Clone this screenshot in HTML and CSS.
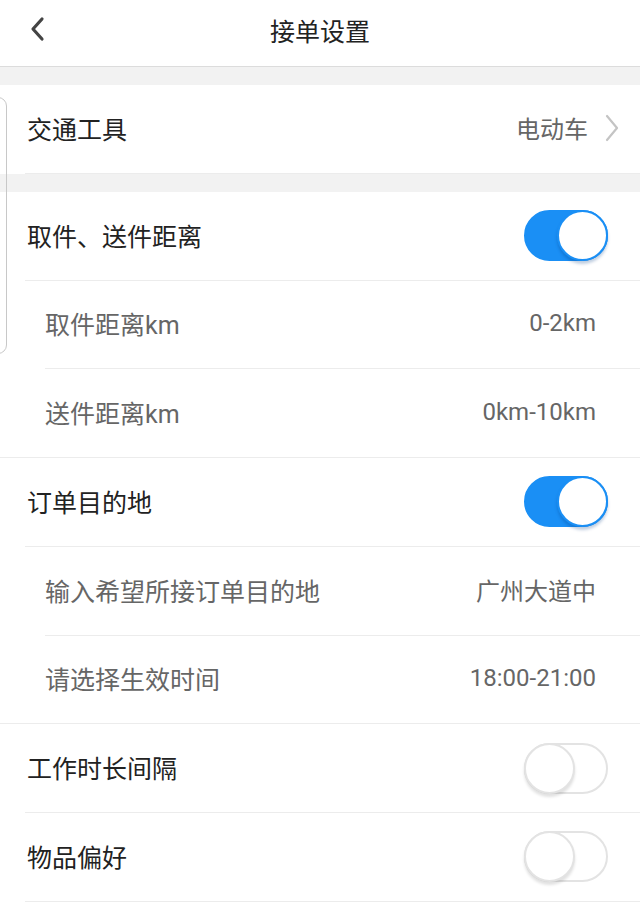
FILE: index.html
```html
<!DOCTYPE html>
<html lang="zh-CN">
<head>
    <meta charset="UTF-8">
    <meta name="viewport" content="width=device-width, initial-scale=1.0">
    <title>接单设置</title>
    <link rel="stylesheet" href="styles.css">
</head>
<body>
    <header class="topbar">
        <span class="back">
            <svg width="18" height="26" viewBox="0 0 18 26"><path d="M14 3 L5 13 L14 23" fill="none" stroke="#444" stroke-width="3.2" stroke-linecap="round" stroke-linejoin="round"/></svg>
        </span>
        <h1 class="title">接单设置</h1>
    </header>

    <div class="gap"></div>

    <div class="row">
        <span class="label">交通工具</span>
        <span class="value">电动车</span>
        <svg class="arrow" width="16" height="28" viewBox="0 0 16 28"><path d="M3 2 L13 14 L3 26" fill="none" stroke="#c4c4c4" stroke-width="2.2" stroke-linecap="round" stroke-linejoin="round"/></svg>
    </div>

    <div class="gap"></div>

    <div class="list">
        <div class="row toggle-row">
            <span class="label">取件、送件距离</span>
            <span class="switch on"><span class="knob"></span></span>
        </div>
        <div class="row sub">
            <span class="label">取件距离km</span>
            <span class="value">0-2km</span>
        </div>
        <div class="row sub last">
            <span class="label">送件距离km</span>
            <span class="value">0km-10km</span>
        </div>
        <div class="row toggle-row">
            <span class="label">订单目的地</span>
            <span class="switch on"><span class="knob"></span></span>
        </div>
        <div class="row sub">
            <span class="label">输入希望所接订单目的地</span>
            <span class="value">广州大道中</span>
        </div>
        <div class="row sub last">
            <span class="label">请选择生效时间</span>
            <span class="value">18:00-21:00</span>
        </div>
        <div class="row toggle-row">
            <span class="label">工作时长间隔</span>
            <span class="switch"><span class="knob"></span></span>
        </div>
        <div class="row toggle-row">
            <span class="label">物品偏好</span>
            <span class="switch"><span class="knob"></span></span>
        </div>
    </div>

    <div class="side-tab"></div>
</body>
</html>
```

FILE: styles.css
```css
body {
    margin: 0;
    background-color: #ffffff;
    font-family: Roboto, "Noto Sans CJK SC", sans-serif;
    color: #222;
    width: 640px;
    overflow: hidden;
}
.topbar {
    box-sizing: border-box;
    height: 67px;
    padding-bottom: 6px;
    border-bottom: 1px solid #dcdcdc;
    display: flex;
    align-items: center;
    justify-content: center;
    position: relative;
}
.back {
    position: absolute;
    left: 28px;
    top: 16px;
    width: 18px;
    height: 26px;
}
.title {
    margin: 0;
    font-size: 25px;
    font-weight: normal;
    color: #222;
}
.gap {
    height: 18px;
    background-color: #f2f2f2;
}
.row {
    box-sizing: border-box;
    height: 88.75px;
    margin-left: 25px;
    padding: 0 33px 0 2px;
    display: flex;
    align-items: center;
    border-bottom: 1px solid #ececec;
}
.label {
    flex: 1;
    font-size: 25px;
    color: #222;
    margin-top: -2px;
}
.value {
    font-size: 24px;
    color: #666;
    margin-top: -2px;
}
.arrow {
    margin-left: 16px;
    margin-right: -13px;
    margin-top: -2px;
}
.sub {
    margin-left: 45px;
    padding-left: 0;
    padding-right: 44px;
}
.sub .label {
    color: #666;
}
.sub.last {
    margin-left: 0;
    padding-left: 45px;
}
.switch {
    box-sizing: border-box;
    width: 84px;
    height: 51px;
    border-radius: 26px;
    border: 2px solid #e3e3e3;
    background-color: #fff;
    position: relative;
    margin-right: -1px;
}
.switch .knob {
    position: absolute;
    left: -2px;
    top: -2px;
    box-sizing: border-box;
    width: 51px;
    height: 51px;
    border-radius: 50%;
    background-color: #fff;
    border: 2px solid #e3e3e3;
    box-shadow: 0 3px 3px rgba(0, 0, 0, 0.12);
}
.switch.on {
    background-color: #1a8ff5;
    border-color: #1a8ff5;
}
.switch.on .knob {
    left: auto;
    right: -2px;
    border-color: #1a8ff5;
    box-shadow: 0 3px 3px rgba(0, 60, 130, 0.25);
}
.side-tab {
    position: absolute;
    left: -12px;
    top: 97px;
    width: 17px;
    height: 255px;
    border: 1px solid #c8c8c8;
    border-radius: 9px;
}
```
